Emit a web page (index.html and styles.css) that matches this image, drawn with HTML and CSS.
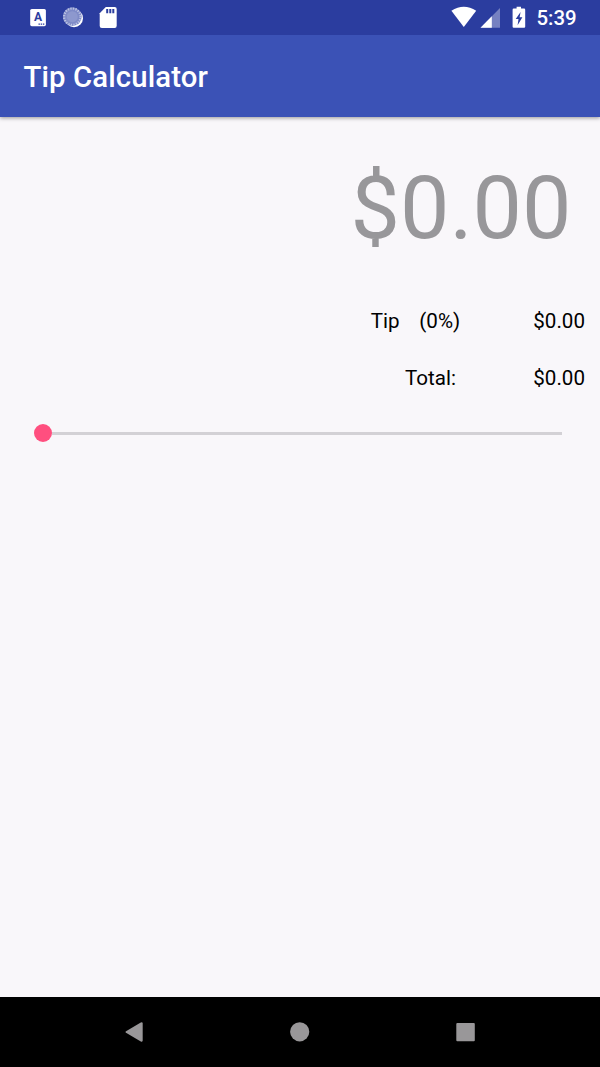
FILE: index.html
```html
<!DOCTYPE html>
<html lang="en">
<head>
<meta charset="utf-8">
<title>Tip Calculator</title>
<link rel="stylesheet" href="styles.css">
</head>
<body>
<div class="screen">
  <header class="status">
    <svg class="status-icons" width="150" height="35" viewBox="0 0 150 35">
      <rect x="30.2" y="9" width="15.7" height="17.2" rx="1.6" fill="#fff"/>
      <text class="badge-letter" x="38" y="21.4">A</text>
      <path d="M38.5 24.2H44.5" stroke="#2b3d9f" stroke-width="1.2" stroke-dasharray="1.4 .8"/>
      <circle cx="74" cy="18.2" r="9" fill="#fff"/>
      <circle cx="72.3" cy="16.7" r="9.4" fill="#7f8bc7"/>
      <circle cx="72.3" cy="16.7" r="8.2" fill="none" stroke="#bcc3e3" stroke-width="2.2" stroke-dasharray="1.3 1.3"/>
      <circle cx="72.3" cy="16.7" r="5.5" fill="#8d98ce"/>
      <path d="M105.8 7H114.6Q116.7 7 116.7 9V25.8Q116.7 28 114.6 28H101.8Q99.7 28 99.7 25.8V13.2Z" fill="#fff"/>
      <path d="M107.2 9V13.2M110.3 9V13.2M113.3 9V13.2" stroke="#2b3d9f" stroke-width="2"/>
    </svg>
    <div class="status-right">
      <svg class="signals" width="64" height="35" viewBox="0 0 64 35">
        <path d="M11.4 10.7Q23.8 3 36.2 10.7L23.8 27Z" fill="#fff"/>
        <path d="M60 8V27.7H40.5Z" fill="#7681c1"/>
        <path d="M51.8 16.2V27.7H40.5Z" fill="#fff"/>
      </svg>
      <svg class="battery" width="14" height="35" viewBox="0 0 14 35">
        <path d="M4.6 6.8H9V8.6H12.1Q13.2 8.6 13.2 9.7V26.7Q13.2 27.8 12.1 27.8H1.7Q.6 27.8 .6 26.7V9.7Q.6 8.6 1.7 8.6H4.6Z" fill="#fff"/>
        <path d="M8.6 12 3.7 19H6.5L5.6 25.2 10.4 17.2H7.6Z" fill="#2b3d9f"/>
      </svg>
      <span class="clock">5:39</span>
    </div>
  </header>
  <div class="appbar"><h1 class="title">Tip Calculator</h1></div>
  <main class="content">
    <div class="amount">$0.00</div>
    <div class="row">
      <span class="tip-label">Tip</span><span class="tip-percent">(0%)</span><span class="value">$0.00</span>
    </div>
    <div class="row">
      <span class="total-label">Total:</span><span class="value">$0.00</span>
    </div>
    <div class="slider"><span class="thumb"></span><span class="track"></span></div>
  </main>
  <nav class="navbar">
    <svg width="600" height="70" viewBox="0 0 600 70" fill="#999799">
      <path d="M126 34.2 140.8 25.4Q142.7 24.8 142.7 26.4V43.5Q142.7 45.2 140.8 44.4L126 35.8Q124.8 35 126 34.2Z"/>
      <circle cx="299.7" cy="34.8" r="9.6"/>
      <rect x="456.3" y="25.9" width="18.5" height="18.4" rx="1"/>
    </svg>
  </nav>
</div>
</body>
</html>
```
FILE: styles.css
```css
body {
  margin: 0;
  font-family: Roboto, sans-serif;
  background: #f9f7fa;
}
.screen {
  width: 600px;
  height: 1067px;
  display: flex;
  flex-direction: column;
  overflow: hidden;
}
.status {
  height: 35px;
  display: flex;
  justify-content: space-between;
  background: #2b3d9f;
  color: #fff;
  z-index: 1;
}
.status svg,
.navbar svg {
  display: block;
}
.badge-letter {
  font-size: 12px;
  font-weight: 700;
  text-anchor: middle;
  fill: #2b3d9f;
}
.status-right {
  display: flex;
  width: 160px;
}
.signals {
  margin-right: 8px;
}
.signals,
.battery {
  flex: none;
}
.clock {
  margin-left: 10.5px;
  padding-top: 1px;
  font-size: 20.4px;
  font-weight: 500;
  line-height: 35px;
}
.appbar {
  height: 82px;
  box-sizing: border-box;
  padding: 1px 0 0 23.5px;
  background: #3b52b6;
  box-shadow: 0 1px 4px rgba(0, 0, 0, .4);
}
.title {
  margin: 0;
  font-size: 29.3px;
  font-weight: 500;
  line-height: 82px;
  letter-spacing: .13px;
  color: #fff;
}
.content {
  flex: 1;
}
.amount {
  height: 103px;
  margin: 39px 28.5px 34px 0;
  font-size: 88px;
  line-height: 103px;
  text-align: right;
  color: #98979a;
}
.row {
  display: flex;
  height: 57px;
  padding-right: 15px;
  justify-content: flex-end;
  font-size: 20.6px;
  line-height: 57px;
  color: #000;
}
.tip-label {
  width: 48.5px;
}
.tip-percent {
  width: 114px;
}
.total-label {
  width: 128.3px;
}
.slider {
  display: flex;
  align-items: center;
  height: 18px;
  margin: 17px 38px 0 34px;
}
.thumb {
  width: 18px;
  height: 18px;
  border-radius: 50%;
  background: #ff4f7f;
}
.track {
  flex: 1;
  height: 3px;
  background: #d3d1d5;
}
.navbar {
  height: 70px;
  background: #000;
}
```
